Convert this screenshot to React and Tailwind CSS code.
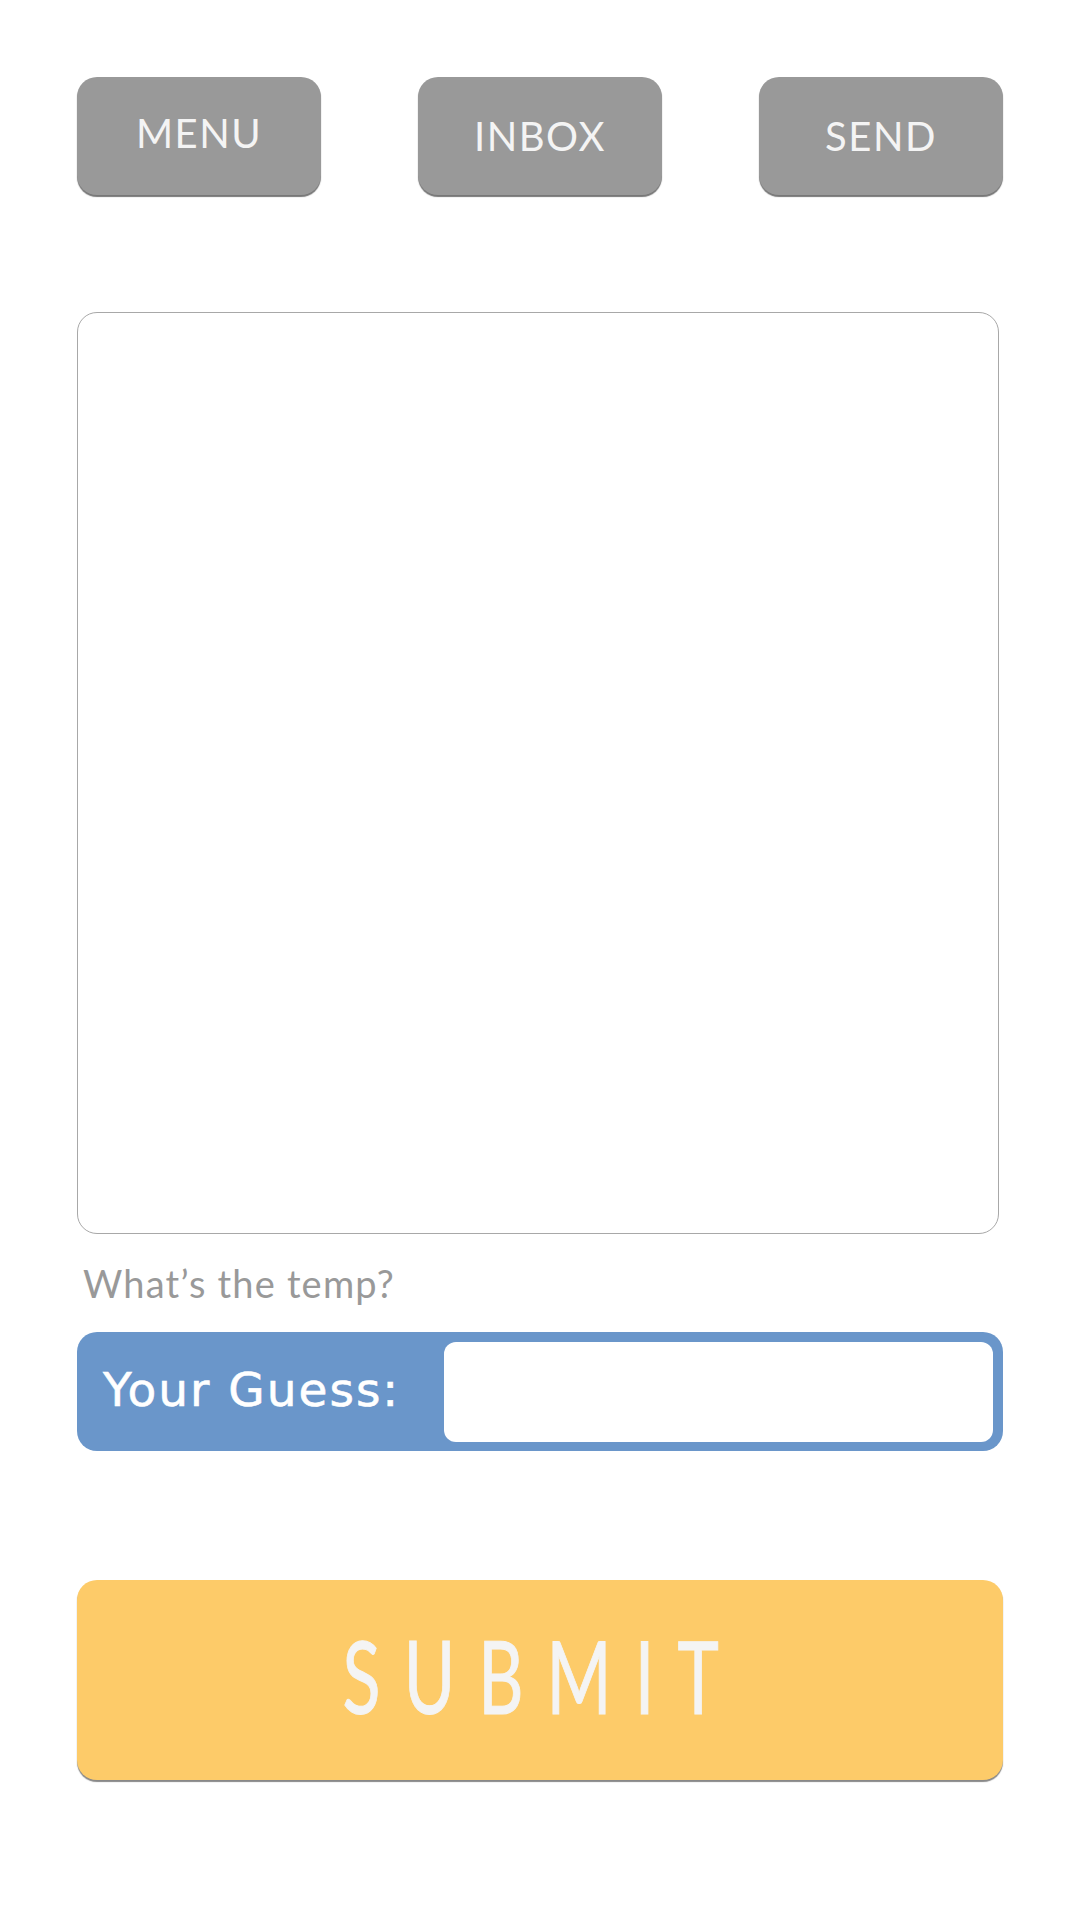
import React, { useState } from 'react';

const NavButton = ({ label, offset = '' }) => (
  <button
    className={`w-[244px] h-[118px] rounded-[20px] bg-[#999999] shadow-[0_2px_1px_#777777]
      text-[#f4f4f4] text-[40px] tracking-[1.5px] leading-none flex items-center justify-center ${offset}`}
  >
    {label}
  </button>
);

export default function App() {
  const [guess, setGuess] = useState('');

  return (
    <div
      className="w-[1080px] min-h-[1920px] bg-white px-[77px] pt-[77px]"
      style={{ fontFamily: 'Lato, "Open Sans", sans-serif' }}
    >
      {/* top nav */}
      <div className="flex justify-between">
        <NavButton label="MENU" offset="pb-[6px]" />
        <NavButton label="INBOX" />
        <NavButton label="SEND" />
      </div>

      {/* drawing area */}
      <div className="mt-[117px] w-[922px] h-[922px] rounded-[20px] border border-[#a8a8a8] bg-white" />

      {/* prompt */}
      <div className="h-[98px] flex items-center pl-[6px]">
        <span className="text-[38px] leading-none text-[#999999] tracking-[1.2px]">
          What’s the temp?
        </span>
      </div>

      {/* guess bar */}
      <div className="h-[119px] rounded-[20px] bg-[#6a96ca] flex items-center">
        <span
          className="pl-[26px] pb-[4px] text-[47px] leading-none text-white tracking-[2px] [-webkit-text-stroke:0.6px_white]"
          style={{ fontFamily: '"DejaVu Sans", sans-serif' }}
        >
          Your Guess:
        </span>
        <input
          value={guess}
          onChange={e => setGuess(e.target.value)}
          className="ml-auto mr-[10px] w-[549px] h-[100px] rounded-[12px] bg-white outline-none px-4 text-[36px]"
        />
      </div>

      {/* submit */}
      <button
        className="mt-[129px] w-full h-[200px] rounded-[20px] bg-[#fdcb69] shadow-[0_2px_1px_#888888]
          flex items-center justify-center"
      >
        <span className="inline-block text-[100px] leading-none text-[#f4f4f4] tracking-[33px] scale-x-[0.7] pl-[33px] -translate-x-[9px] -translate-y-[5px] [-webkit-text-stroke:1px_#f4f4f4]">
          SUBMIT
        </span>
      </button>
    </div>
  );
}
